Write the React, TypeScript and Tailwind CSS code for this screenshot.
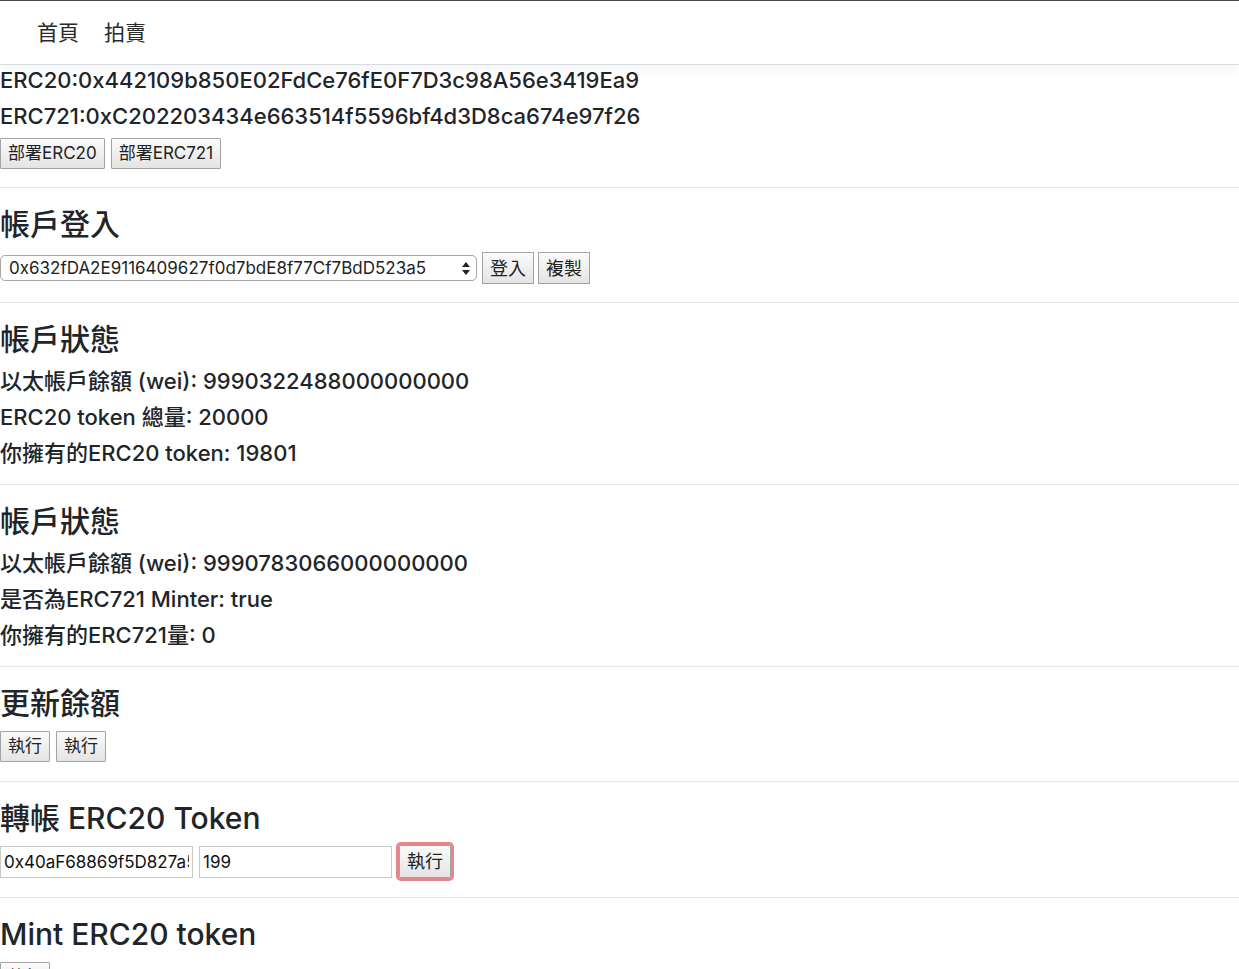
import React from "react";

const font = "font-['Inter','Noto_Sans_CJK_TC',sans-serif]";

function Btn({ children }: { children: React.ReactNode }) {
  return (
    <button className="h-[31px] px-[7px] border border-[#a3a3a3] bg-gradient-to-b from-[#fbfbfb] to-[#e4e4e4] text-[17px] leading-none text-[#222] rounded-[1px]">
      {children}
    </button>
  );
}

function Heading({ children }: { children: React.ReactNode }) {
  return <h3 className="text-[30px] leading-[36px] font-medium text-[#212529]">{children}</h3>;
}

function Line({ children }: { children: React.ReactNode }) {
  return <p className="text-[22px] leading-[36px] font-medium text-[#212529]">{children}</p>;
}

export default function App() {
  return (
    <div className={`${font} min-h-[969px] bg-white text-[#212529]`}>
      {/* 導覽列 */}
      <nav className="h-[65px] border-t border-[#454545] border-b border-b-[#d6dce1] shadow-[0_6px_10px_rgba(0,0,0,0.04)] flex items-center pl-[37px] gap-[25px] text-[21px] text-[#2a2a2a] relative">
        <a>首頁</a>
        <a>拍賣</a>
      </nav>

      {/* 合約地址 */}
      <div className="flex flex-col gap-[6px] pb-[18px]">
        <p className="text-[22px] leading-[30px] font-medium">ERC20:0x442109b850E02FdCe76fE0F7D3c98A56e3419Ea9</p>
        <p className="text-[22px] leading-[30px] font-medium">ERC721:0xC202203434e663514f5596bf4d3D8ca674e97f26</p>
        <div className="flex gap-[6px] mt-[1px]">
          <Btn>部署ERC20</Btn>
          <Btn>部署ERC721</Btn>
        </div>
      </div>

      <section className="border-t border-[#e6e6e6] pt-[18px] pb-[18px]">
        <Heading>帳戶登入</Heading>
        <div className="flex items-center gap-[4px] mt-[10px] h-[32px]">
          <div className="relative w-[477px] h-[26px] mr-[1px]">
            <select className="appearance-none w-full h-full border border-[#a6a6a6] rounded-[5px] bg-white pl-[8px] text-[17px] text-[#222] outline-none">
              <option>0x632fDA2E9116409627f0d7bdE8f77Cf7BdD523a5</option>
            </select>
            <svg className="absolute right-[7px] top-[7px] pointer-events-none" width="8" height="13" viewBox="0 0 8 13">
              <path d="M4 0 L8 5 L0 5 Z" fill="#222" />
              <path d="M4 13 L8 8 L0 8 Z" fill="#222" />
            </svg>
          </div>
          <button className="h-[32px] w-[52px] border border-[#a3a3a3] bg-gradient-to-b from-[#fbfbfb] to-[#e4e4e4] text-[18px] text-[#222]">登入</button>
          <button className="h-[32px] w-[52px] border border-[#a3a3a3] bg-gradient-to-b from-[#fbfbfb] to-[#e4e4e4] text-[18px] text-[#222]">複製</button>
        </div>
      </section>

      <section className="border-t border-[#e6e6e6] pt-[18px] pb-[13px]">
        <Heading>帳戶狀態</Heading>
        <div className="mt-[6px]">
          <Line>以太帳戶餘額 (wei): 9990322488000000000</Line>
          <Line>ERC20 token 總量: 20000</Line>
          <Line>你擁有的ERC20 token: 19801</Line>
        </div>
      </section>

      <section className="border-t border-[#e6e6e6] pt-[18px] pb-[13px]">
        <Heading>帳戶狀態</Heading>
        <div className="mt-[6px]">
          <Line>以太帳戶餘額 (wei): 9990783066000000000</Line>
          <Line>是否為ERC721 Minter: true</Line>
          <Line>你擁有的ERC721量: 0</Line>
        </div>
      </section>

      <section className="border-t border-[#e6e6e6] pt-[18px] pb-[19px]">
        <Heading>更新餘額</Heading>
        <div className="flex gap-[6px] mt-[10px]">
          <Btn>執行</Btn>
          <Btn>執行</Btn>
        </div>
      </section>

      <section className="border-t border-[#e6e6e6] pt-[18px] pb-[19px]">
        <Heading>轉帳 ERC20 Token</Heading>
        <div className="flex items-center gap-[6px] mt-[9px]">
          <input
            defaultValue="0x40aF68869f5D827a5dD0E2F3B3a0aB55b2d2eC6"
            className="w-[193px] h-[32px] border border-[#c9c9c9] px-[3px] text-[17px] text-[#111] outline-none"
          />
          <input defaultValue="199" className="w-[193px] h-[32px] border border-[#c9c9c9] px-[3px] text-[17px] text-[#111] outline-none" />
          <button className="ml-[1px] h-[33px] w-[52px] border border-[#a3a3a3] bg-gradient-to-b from-[#fbfbfb] to-[#e4e4e4] text-[18px] text-[#222] rounded-[2px] ring-[3px] ring-[#e3868d]">
            執行
          </button>
        </div>
      </section>

      <section className="border-t border-[#e6e6e6] pt-[18px]">
        <Heading>Mint ERC20 token</Heading>
        <div className="flex gap-[6px] mt-[10px]">
          <Btn>執行</Btn>
        </div>
      </section>
    </div>
  );
}
